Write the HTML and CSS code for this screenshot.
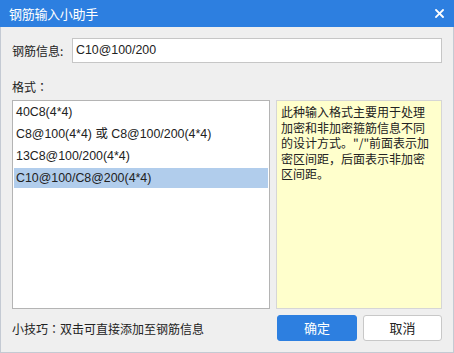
FILE: index.html
```html
<!doctype html>
<html>
	<head>
		<meta charset="utf-8">
		<title>钢筋输入小助手</title>
		<link rel="stylesheet" href="styles.css">
	</head>
	<body>
		<div class="dialog">
			<div class="titleBar">
				<span class="title">钢筋输入小助手</span>
				<span class="close">
					<svg width="9" height="9" viewBox="0 0 9 9"><path d="M1 1L8 8M8 1L1 8" stroke="#fff" stroke-width="1.8" stroke-linecap="square"/></svg>
				</span>
			</div>
			<div class="content">
				<div class="infoRow">
					<label class="label">钢筋信息:</label>
					<div class="input">C10@100/200</div>
				</div>
				<div class="formatLabel">格式<span class="colon">：</span></div>
				<div class="panes">
					<ul class="list">
						<li>40C8(4*4)</li>
						<li>C8@100(4*4) 或 C8@100/200(4*4)</li>
						<li>13C8@100/200(4*4)</li>
						<li class="selected">C10@100/C8@200(4*4)</li>
					</ul>
					<div class="tip">此种输入格式主要用于处理加密和非加密箍筋信息不同的设计方式。"/"前面表示加密区间距，后面表示非加密区间距。</div>
				</div>
				<div class="footer">
					<span class="hint">小技巧<span class="colon">：</span>双击可直接添加至钢筋信息</span>
					<div class="buttons">
						<a class="btn ok">确定</a>
						<a class="btn cancel">取消</a>
					</div>
				</div>
			</div>
		</div>
	</body>
</html>
```

FILE: styles.css
```css
* {
	margin: 0px;
	padding: 0px;
	box-sizing: border-box;
}
body {
	font-family: "Liberation Sans", "Noto Sans CJK SC", sans-serif;
	font-size: 12px;
	color: #222;
	background: #fff;
}
ul {
	list-style-type: none;
}
.dialog {
	width: 454px;
	height: 353px;
	background: #efefef;
	border: 1px solid #c4cad3;
	border-top: none;
	display: flex;
	flex-direction: column;
}
.titleBar {
	height: 27px;
	margin: 0 -1px;
	background: #2d7fe0;
	color: white;
	display: flex;
	align-items: center;
	justify-content: space-between;
	padding: 0 9px;
}
.title {
	font-size: 13px;
	font-family: "Noto Sans CJK SC", sans-serif;
	letter-spacing: -0.3px;
}
.close {
	display: flex;
	margin-right: 1px;
}
.content {
	flex: 1;
	padding: 11px 11px 0 11px;
	display: flex;
	flex-direction: column;
}
.infoRow {
	display: flex;
	align-items: center;
	height: 25px;
}
.label {
	width: 60px;
	font-family: "Noto Sans CJK SC", sans-serif;
}
.input {
	flex: 1;
	height: 25px;
	background: white;
	border: 1px solid #c6c6c6;
	line-height: 23px;
	padding-left: 3px;
	font-size: 12.4px;
}
.colon {
	font-family: "Noto Sans CJK JP", sans-serif;
}
.formatLabel {
	margin-top: 15px;
	height: 17px;
	line-height: 17px;
	font-family: "Noto Sans CJK SC", sans-serif;
}
.panes {
	margin-top: 5px;
	display: flex;
	gap: 6px;
	height: 209px;
}
.list {
	width: 258px;
	background: white;
	border: 1px solid #b4b4b4;
	padding: 1px;
	display: flex;
	flex-direction: column;
	gap: 2px;
	font-size: 12.4px;
}
.list li {
	height: 20px;
	line-height: 20px;
	padding-left: 2px;
	white-space: nowrap;
}
.list li.selected {
	background: #b1cdec;
}
.tip {
	flex: 1;
	background: #ffffcc;
	border: 1px solid #d6d6d6;
	padding: 3px 8px 0 4px;
	line-height: 15.5px;
	font-family: "Noto Sans CJK SC", sans-serif;
}
.footer {
	margin-top: 6px;
	display: flex;
	align-items: center;
	justify-content: space-between;
	height: 26px;
}
.hint {
	font-family: "Noto Sans CJK SC", sans-serif;
}
.buttons {
	display: flex;
	gap: 6px;
}
.btn {
	display: inline-block;
	width: 80px;
	height: 26px;
	line-height: 24px;
	text-align: center;
	border-radius: 3px;
	font-size: 13px;
	font-family: "Noto Sans CJK SC", sans-serif;
}
.ok {
	background: #2d7fe0;
	border: 1px solid #2d7fe0;
	color: white;
}
.cancel {
	width: 79px;
	background: white;
	border: 1px solid #c8c8c8;
	color: #222;
}
```
